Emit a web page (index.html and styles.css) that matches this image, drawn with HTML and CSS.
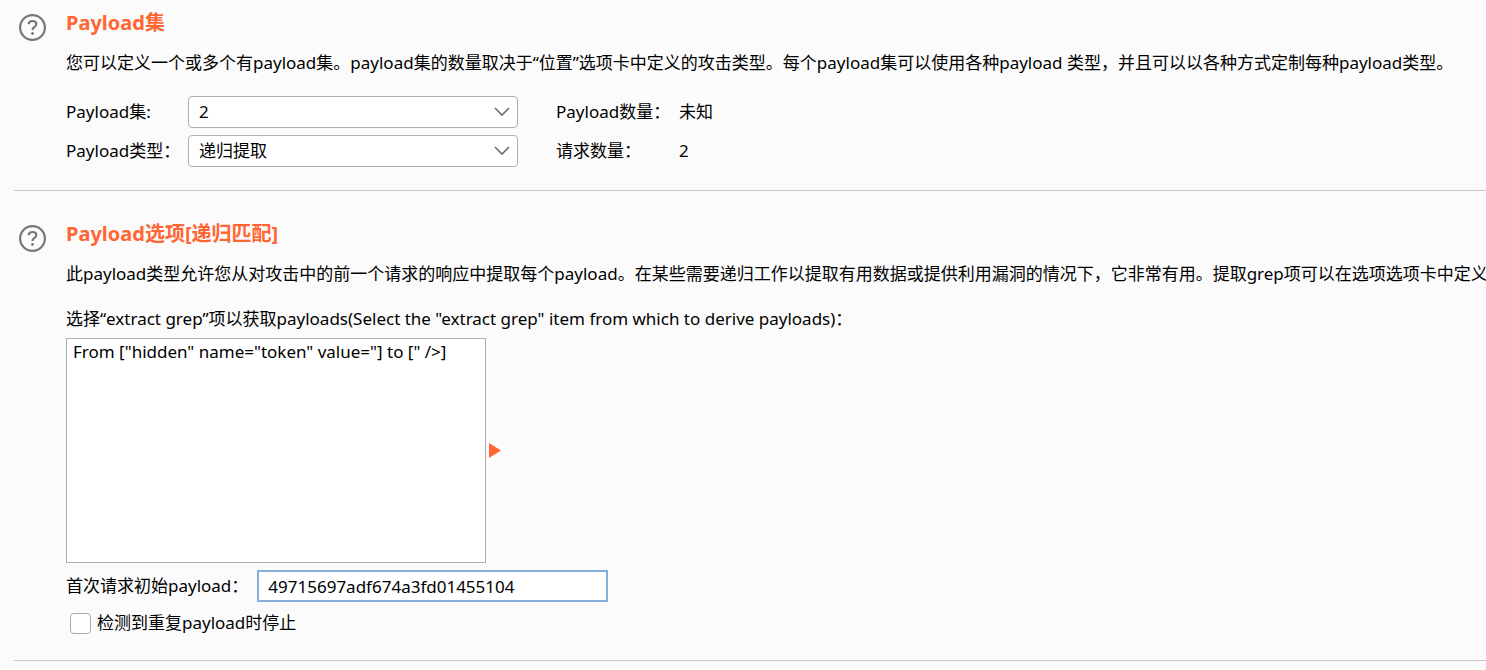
FILE: index.html
```
<!DOCTYPE html>
<html lang="zh-CN">
<head>
  <meta charset="UTF-8" />
  <meta name="viewport" content="width=device-width, initial-scale=1.0" />
  <title>Payload</title>
  <link rel="stylesheet" href="styles.css">
</head>
<body>

<section class="panel">
  <button type="button" class="help" aria-label="帮助">
    <svg viewBox="0 0 28 28" width="28" height="28" fill="none" stroke="#777" stroke-width="2.2">
      <circle cx="14.5" cy="14.5" r="12.4" />
      <path d="M10.6 11.2c.2-2 1.700-3.200 3.900-3.200s3.800 1.200 3.800 3.100c0 1.500-.8 2.300-2 3.100-1.200.9-1.800 1.400-1.800 2.900" />
      <circle cx="14.5" cy="20.500" r="1.400" fill="#777" stroke="none" />
    </svg>
  </button>
  <div class="content">
    <h2>Payload集</h2>
    <p class="desc">您可以定义一个或多个有payload集。payload集的数量取决于“位置”选项卡中定义的攻击类型。每个payload集可以使用各种payload 类型，并且可以以各种方式定制每种payload类型。</p>
    <div class="sets">
      <label for="payloadSet">Payload集:</label>
      <div class="combo">
        <select id="payloadSet">
          <option>1</option>
          <option selected>2</option>
        </select>
        <svg class="arrow" viewBox="0 0 16 10" width="16" height="10" fill="none" stroke="#6e6e6e" stroke-width="1.6"><path d="M1 1l7 7 7-7" /></svg>
      </div>
      <span class="count">Payload数量：</span>
      <span>未知</span>
      <label for="payloadType">Payload类型：</label>
      <div class="combo">
        <select id="payloadType">
          <option selected>递归提取</option>
        </select>
        <svg class="arrow" viewBox="0 0 16 10" width="16" height="10" fill="none" stroke="#6e6e6e" stroke-width="1.6"><path d="M1 1l7 7 7-7" /></svg>
      </div>
      <span class="count">请求数量：</span>
      <span>2</span>
    </div>
  </div>
</section>

<section class="panel">
  <button type="button" class="help" aria-label="帮助">
    <svg viewBox="0 0 28 28" width="28" height="28" fill="none" stroke="#777" stroke-width="2.2">
      <circle cx="14.5" cy="14.5" r="12.4" />
      <path d="M10.6 11.2c.2-2 1.700-3.200 3.900-3.200s3.800 1.200 3.800 3.100c0 1.500-.8 2.300-2 3.100-1.200.9-1.800 1.400-1.800 2.900" />
      <circle cx="14.5" cy="20.500" r="1.400" fill="#777" stroke="none" />
    </svg>
  </button>
  <div class="content">
    <h2>Payload选项[递归匹配]</h2>
    <p class="desc">此payload类型允许您从对攻击中的前一个请求的响应中提取每个payload。在某些需要递归工作以提取有用数据或提供利用漏洞的情况下，它非常有用。提取grep项可以在选项选项卡中定义</p>
    <label class="list-label" for="grepItems">选择“extract grep”项以获取payloads(Select the "extract grep" item from which to derive payloads)：</label>
    <div class="list-row">
      <select id="grepItems" class="list" size="8">
        <option>From ["hidden" name="token" value="] to [" /&gt;]</option>
      </select>
      <svg viewBox="0 0 12 15" width="12" height="15" fill="#ff6633"><path d="M0 0l12 7.5L0 15z" /></svg>
    </div>
    <div class="initial">
      <label for="initial">首次请求初始payload：</label>
      <input type="text" id="initial" value="49715697adf674a3fd01455104">
    </div>
    <div class="stop">
      <input type="checkbox" id="stop">
      <label for="stop">检测到重复payload时停止</label>
    </div>
  </div>
</section>

</body>
</html>
```
FILE: styles.css
```
* { box-sizing: border-box; }
body {
  margin: 0;
  padding-left: 14px;
  background: #fbfbfb;
  color: #000;
  font: 17px/24px "Noto Sans", "Noto Sans CJK SC", sans-serif;
  overflow: hidden;
}
.panel {
  display: flex;
  gap: 20px;
  padding: 9px 0 23px 4px;
  border-bottom: 1px solid #c8c8c8;
}
.panel + .panel {
  padding-top: 29px;
}
.help {
  flex: none;
  width: 28px;
  height: 28px;
  margin-top: 4px;
  padding: 0;
  border: none;
  background: none;
}
.help svg {
  display: block;
  overflow: visible;
}
.content {
  flex: 1;
  min-width: 0;
}
h2 {
  margin: 0 0 14px;
  font-size: 20px;
  line-height: 28px;
  color: #ff6633;
}
.desc {
  margin: 0 0 21px;
  white-space: nowrap;
}
.sets {
  display: grid;
  grid-template-columns: 122px 330px 161px auto;
  row-gap: 7px;
  align-items: center;
}
.count {
  padding-left: 38px;
}
select, input {
  font: inherit;
  color: inherit;
}
.combo {
  position: relative;
}
.combo select {
  display: block;
  width: 100%;
  height: 32px;
  padding: 0 30px 0 10px;
  border: 1px solid #b5afb1;
  border-radius: 4px;
  background: #fff;
  appearance: none;
}
.arrow {
  position: absolute;
  right: 8px;
  top: 11px;
  pointer-events: none;
}
.list-label {
  display: block;
  margin-bottom: 7px;
}
.list-row {
  display: flex;
  align-items: center;
  gap: 3px;
}
.list {
  width: 420px;
  height: 225px;
  padding: 1px 4px;
  border: 1px solid #b5afb1;
  border-radius: 0;
  background: #fff;
}
.initial {
  display: flex;
  align-items: center;
  gap: 9px;
  margin: 7px 0;
}
.initial input {
  width: 351px;
  height: 32px;
  padding: 0 9px;
  border: 2px solid #87afdc;
  background: #fff;
}
.stop {
  display: flex;
  align-items: center;
  gap: 6px;
  height: 28px;
  padding-left: 4px;
}
.stop input {
  width: 21px;
  height: 21px;
  margin: 0;
  border: 1px solid #aaa;
  border-radius: 4px;
  background: #fff;
  appearance: none;
}
.stop input:checked {
  background: #87afdc;
}
```
